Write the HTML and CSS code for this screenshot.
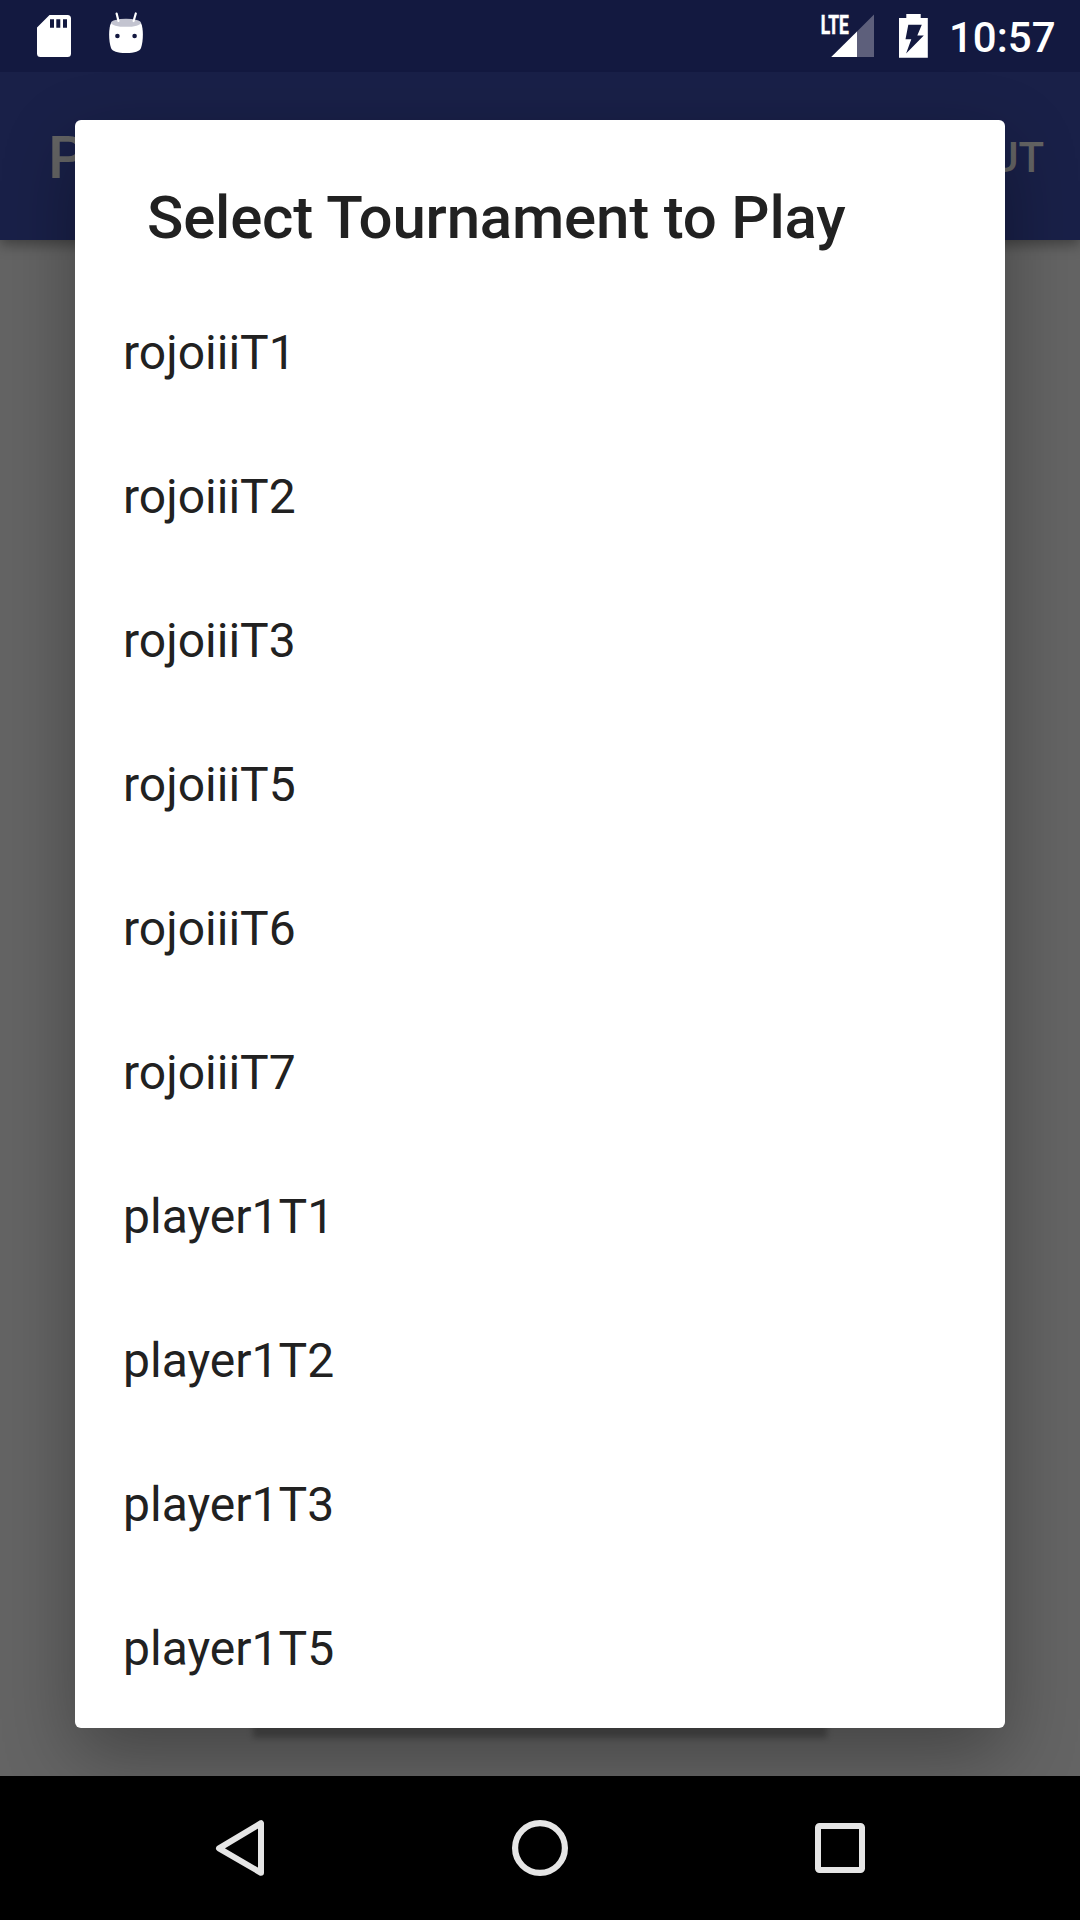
FILE: index.html
```html
<!DOCTYPE html>
<html lang="en">
<head>
<meta charset="utf-8">
<title>Select Tournament</title>
<link rel="stylesheet" href="styles.css">
</head>
<body>
<div class="screen">
  <header class="status-bar">
    <svg class="status-icons" width="150" height="72" viewBox="0 0 150 72">
      <path fill="#fff" fill-rule="evenodd" d="M49.5 15H67.500Q71 15 71 18.500V53.500Q71 57 67.500 57H40.500Q37 57 37 53.500V27.500ZM50 19.200V27.700H54V19.200ZM56.300 19.200V27.700H60.300V19.200ZM63 19.200V27.700H67V19.200Z"/>
      <path fill="#fff" d="M111 23C108.500 28 108.500 41 111 48C112.500 51.500 117 53 126 53S139.500 51.500 141 48C143.500 41 143.500 28 141 23Z"/>
      <ellipse cx="126" cy="22.800" rx="15" ry="4" fill="#c3c4d0"/>
      <path d="M116.600 13.500L118.500 21M135.800 13.500L133.600 21" stroke="#fff" stroke-width="2.200" stroke-linecap="round"/>
      <circle cx="117.400" cy="36" r="2.300" fill="#131840"/>
      <circle cx="134.600" cy="36" r="2.300" fill="#131840"/>
    </svg>
    <div class="status-right">
      <svg width="120" height="72" viewBox="815 0 120 72">
        <text class="network" x="820.800" y="33.500" textLength="28" lengthAdjust="spacingAndGlyphs">LTE</text>
        <path fill="#5d5f7b" d="M874 14.500V57H856.500V32Z"/>
        <path fill="#fff" d="M857 31.500V57H831.200Z"/>
        <path fill="#fff" fill-rule="evenodd" d="M906.300 14H920.700V18H927.800V57.800H899V18H906.300ZM908.300 24.700L905.500 39.300H911.300L906.100 53.500L923.800 35.500H917.300L921.800 24.700Z"/>
      </svg>
      <span class="clock">10:57</span>
    </div>
  </header>
  <div class="toolbar">
    <span class="app-title">P</span>
    <span class="action">OUT</span>
  </div>
  <main class="content">
    <div class="button"></div>
  </main>
  <section class="dialog" role="dialog">
    <h1 class="dialog-title">Select Tournament to Play</h1>
    <ul class="list">
      <li>rojoiiiT1</li>
      <li>rojoiiiT2</li>
      <li>rojoiiiT3</li>
      <li>rojoiiiT5</li>
      <li>rojoiiiT6</li>
      <li>rojoiiiT7</li>
      <li>player1T1</li>
      <li>player1T2</li>
      <li>player1T3</li>
      <li>player1T5</li>
    </ul>
  </section>
  <nav class="nav-bar">
    <svg viewBox="0 0 72 72"><path d="M57 11.200V60.800L15 36.300Z" fill="none" stroke="#e5e5e5" stroke-width="6" stroke-linejoin="round"/></svg>
    <svg viewBox="0 0 72 72"><circle cx="36" cy="36" r="24.900" fill="none" stroke="#e5e5e5" stroke-width="6.200"/></svg>
    <svg viewBox="0 0 72 72"><rect x="14" y="14" width="44" height="44" rx="1.500" fill="none" stroke="#e5e5e5" stroke-width="6"/></svg>
  </nav>
</div>
</body>
</html>
```
FILE: styles.css
```css
* { box-sizing: border-box; }

body {
  margin: 0;
  background: #646464;
  font-family: Roboto, "Liberation Sans", sans-serif;
}

.screen {
  position: relative;
  display: flex;
  flex-direction: column;
  width: 1080px;
  height: 1920px;
  overflow: hidden;
}

.status-bar {
  z-index: 2;
  display: flex;
  flex: 0 0 72px;
  justify-content: space-between;
  background: #131940;
}

.status-right {
  display: flex;
  width: 265px;
}

.network {
  font-size: 26px;
  font-weight: 700;
  fill: #fff;
  stroke: #fff;
  stroke-width: .6px;
}

.clock {
  padding: 3px 0 0 14px;
  color: #fff;
  font-size: 42px;
  font-weight: 500;
  line-height: 69px;
}

.toolbar {
  z-index: 1;
  display: flex;
  flex: 0 0 168px;
  justify-content: space-between;
  align-items: center;
  padding: 3px 36px 0 48px;
  background: #192048;
  box-shadow: 0 5px 12px rgba(0, 0, 0, .35);
  color: #646464;
  font-weight: 500;
}

.app-title { font-size: 60px; }

.action { font-size: 42px; }

.content {
  display: flex;
  flex: 1;
  justify-content: center;
  align-items: flex-end;
  padding-bottom: 50px;
  background: #646464;
}

.button {
  width: 574px;
  height: 132px;
  background: #565656;
  box-shadow: 0 12px 6px rgba(0, 0, 0, .25);
}

.dialog {
  position: absolute;
  z-index: 3;
  top: 120px;
  left: 75px;
  width: 930px;
  height: 1608px;
  border-radius: 6px;
  background: #fff;
  box-shadow: 0 26px 72px rgba(0, 0, 0, .32);
  color: #212121;
}

.dialog-title {
  height: 161px;
  margin: 0;
  padding: 63px 72px 0;
  font-size: 60px;
  font-weight: 500;
  letter-spacing: -.2px;
  line-height: 70px;
}

.list {
  margin: 0;
  padding: 0;
  list-style: none;
}

.list li {
  height: 144px;
  padding-left: 48px;
  font-size: 48px;
  line-height: 144px;
}

.nav-bar {
  z-index: 4;
  display: flex;
  flex: 0 0 144px;
  justify-content: center;
  align-items: center;
  gap: 228px;
  background: #000;
}

.nav-bar svg {
  width: 72px;
  height: 72px;
}
```
